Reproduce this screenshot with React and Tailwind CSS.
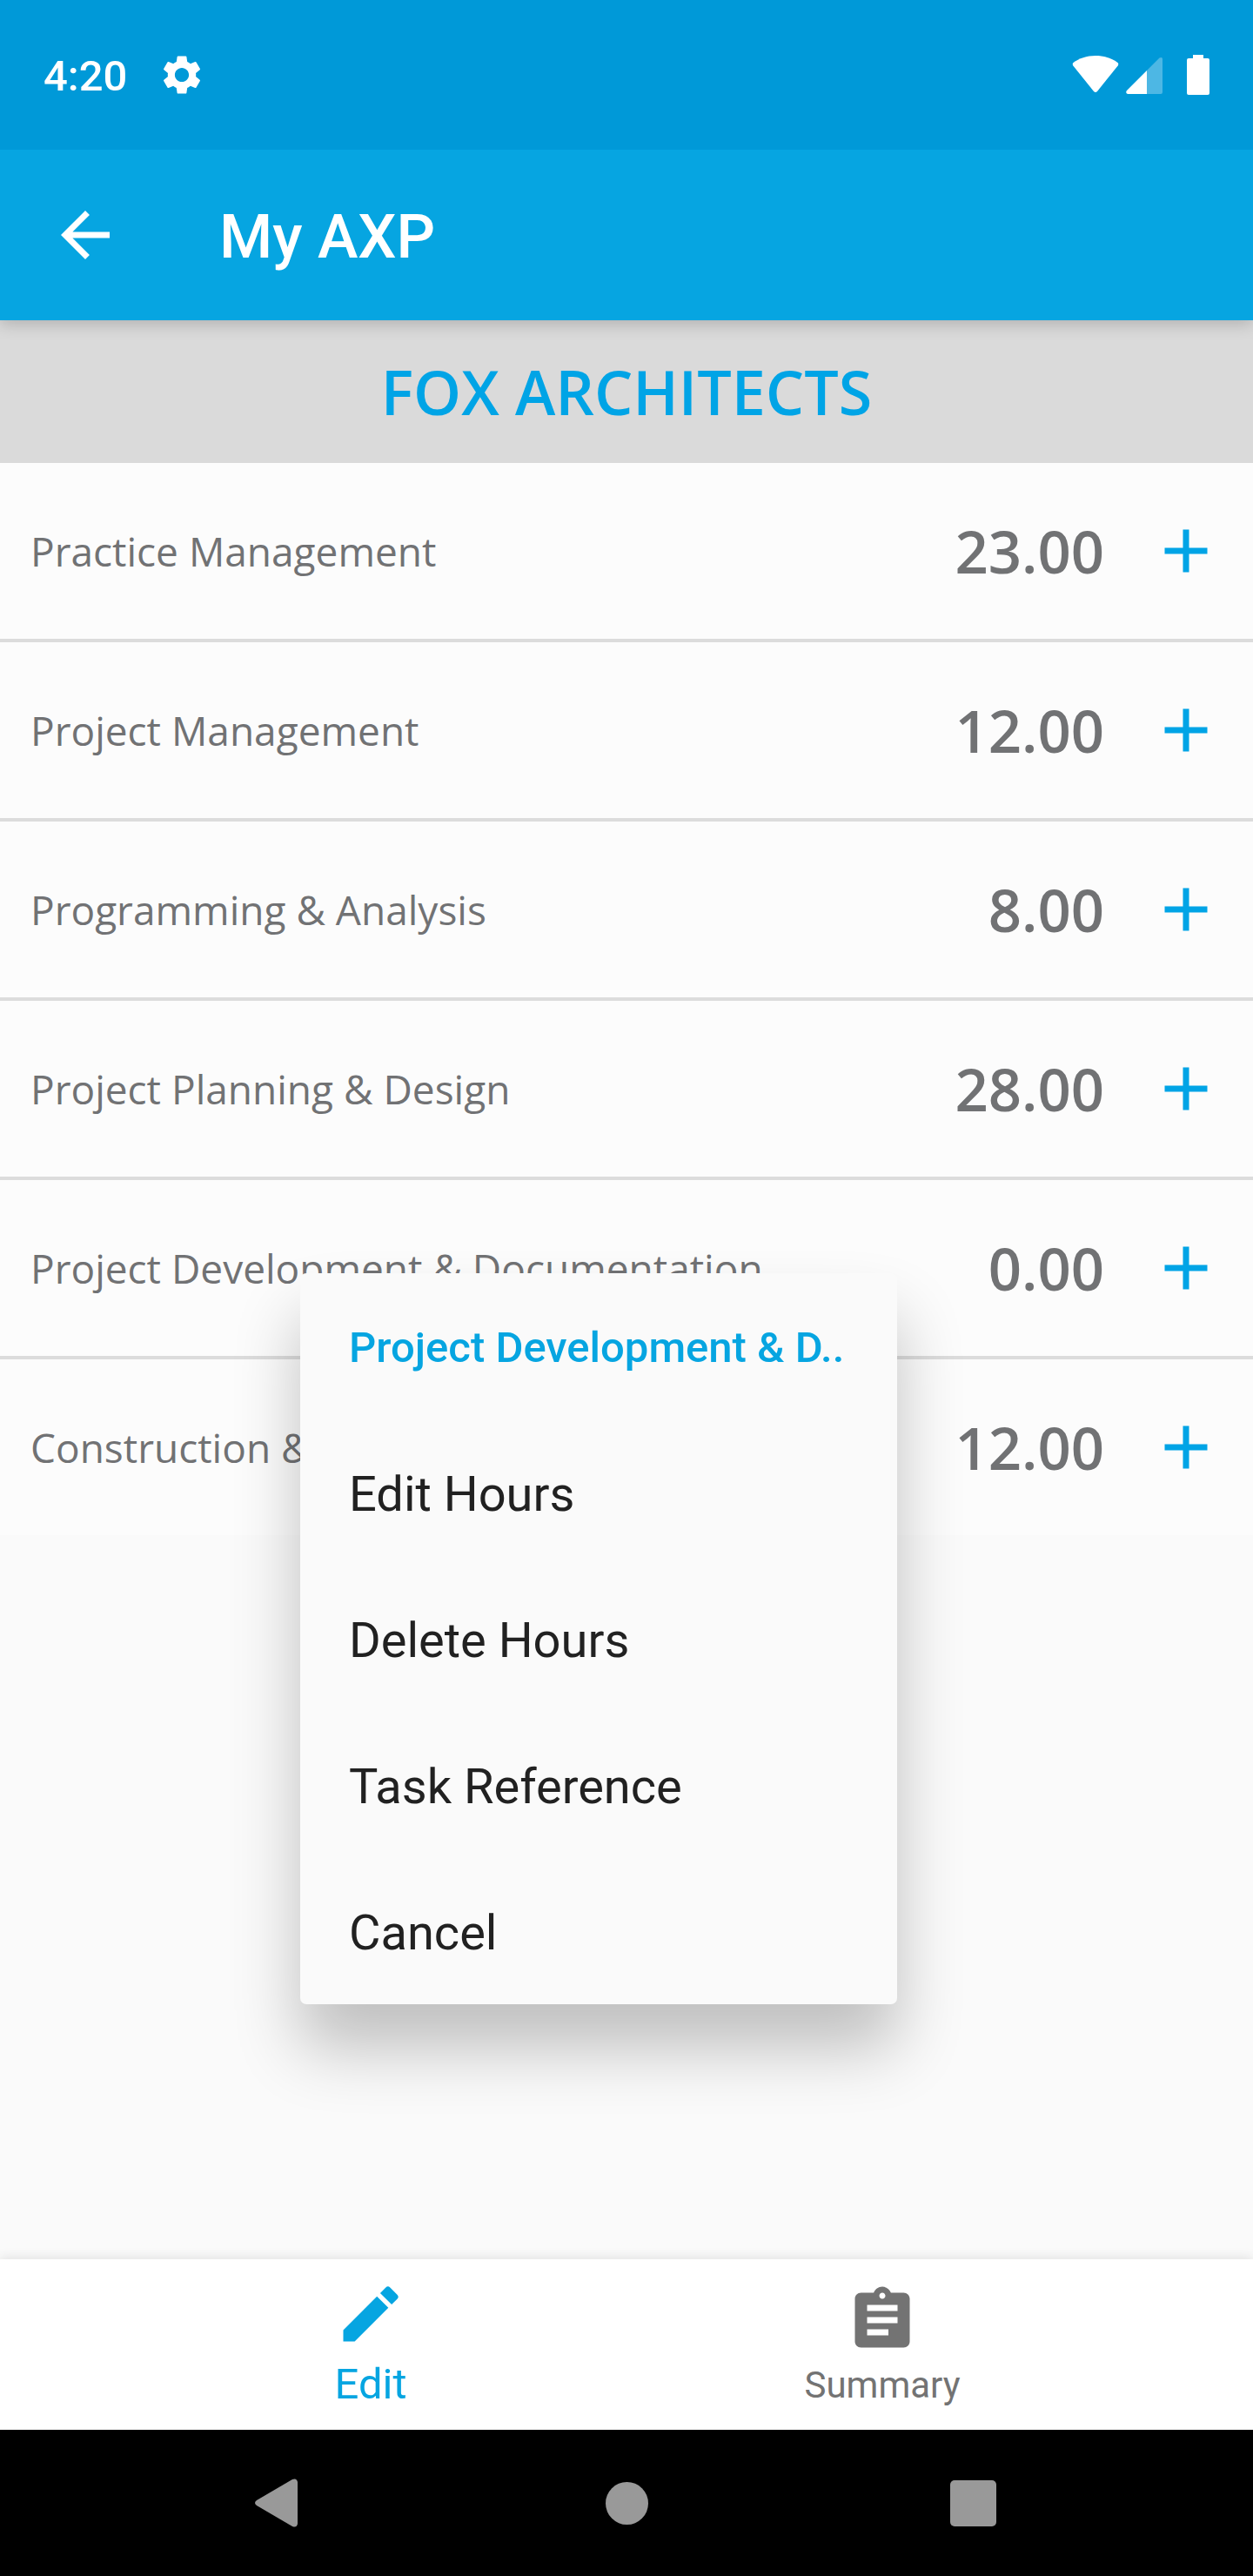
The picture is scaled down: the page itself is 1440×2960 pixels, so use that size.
import React from "react";
import {
  MdAdd,
  MdArrowBack,
  MdAssignment,
  MdEdit,
  MdSettings
} from "react-icons/md";

const categories = [
  { name: "Practice Management", hours: "23.00" },
  { name: "Project Management", hours: "12.00" },
  { name: "Programming & Analysis", hours: "8.00" },
  { name: "Project Planning & Design", hours: "28.00" },
  { name: "Project Development & Documentation", hours: "0.00" },
  { name: "Construction & Evaluation", hours: "12.00" }
];

const menuItems = ["Edit Hours", "Delete Hours", "Task Reference", "Cancel"];

function StatusBar() {
  return (
    <div className="relative z-20 h-[172px] bg-[#0099d8] flex items-center justify-between pl-[50px] pr-[50px] text-white">
      <div className="flex items-center gap-9">
        <span className="pt-1 text-[49px] leading-[56px] font-medium">4:20</span>
        <MdSettings className="size-[54px]" />
      </div>
      <div className="flex items-center">
        <svg className="w-[54px] h-[46px]" viewBox="0 0 54 46" fill="currentColor">
          <path d="M27 1C17 1 8 4 1.500 9Q0 10.500 1.300 12.500L25 42Q27 44 29 42L52.700 12.500Q54 10.500 52.500 9C46 4 37 1 27 1Z" />
        </svg>
        <svg className="ml-2 w-[43px] h-[46px]" viewBox="0 0 43 46" fill="currentColor">
          <path d="M42 5V43Q42 45 40 45H24V18L38.500 3.500Q42 2 42 5Z" opacity="0.3" />
          <path d="M24 18V45H2Q-1 44 1 41Z" />
        </svg>
        <svg className="ml-[27px] w-[26px] h-[46px]" viewBox="0 0 26 46" fill="currentColor">
          <path d="M7 0H19V4H24Q26 4 26 6V44Q26 46 24 46H2Q0 46 0 44V6Q0 4 2 4H7Z" />
        </svg>
      </div>
    </div>
  );
}

function AppBar() {
  return (
    <header className="relative z-10 h-[196px] bg-[#06a5e1] flex items-center pl-14 gap-28 text-white shadow-[0_4px_18px_rgba(0,0,0,0.2)]">
      <button type="button" aria-label="Back">
        <MdArrowBack className="size-[84px]" />
      </button>
      <h1 className="pt-1 text-[70px] leading-[82px] font-medium">My AXP</h1>
    </header>
  );
}

function CategoryRow({ name, hours }) {
  return (
    <li className="h-[206px] bg-[#fcfcfc] border-b-4 border-[#dcdcdc] last:h-[202px] last:border-b-0 flex items-center px-[35px] text-[#717274] font-['Open_Sans',sans-serif]">
      <span className="flex-1 text-[46px] leading-[62px]">{name}</span>
      <span className="text-[67px] leading-[90px] font-semibold">{hours}</span>
      <button type="button" aria-label={`Add hours to ${name}`} className="ml-[52px] text-[#00a4e6]">
        <MdAdd className="size-[84px]" />
      </button>
    </li>
  );
}

function HoursMenu() {
  return (
    <div
      role="menu"
      className="absolute left-[345px] top-[1463px] z-20 w-[686px] rounded-[7px] bg-[#fafafa] shadow-[0_50px_76px_rgba(0,0,0,0.24)]"
    >
      <div className="h-[168px] px-14 pt-1 flex items-center text-[49px] leading-[58px] font-medium text-[#06a5e1] whitespace-nowrap">
        Project Development &amp; D..
      </div>
      {menuItems.map((item) => (
        <button
          key={item}
          type="button"
          role="menuitem"
          className="w-full h-[168px] px-14 pt-1 flex items-center text-[56px] leading-[66px] text-[#212121]"
        >
          {item}
        </button>
      ))}
    </div>
  );
}

function BottomTabs() {
  return (
    <nav className="relative h-[196px] bg-white flex justify-center shadow-[0_-2px_12px_rgba(0,0,0,0.1)]">
      <button type="button" className="w-[588px] pt-[21px] flex flex-col items-center text-[#06a5e1]">
        <MdEdit className="size-[84px]" />
        <span className="mt-2.5 text-[49px] leading-[58px]">Edit</span>
      </button>
      <button type="button" className="w-[588px] pt-7 flex flex-col items-center text-[#737373]">
        <MdAssignment className="size-[84px]" />
        <span className="mt-2 text-[42px] leading-[50px]">Summary</span>
      </button>
    </nav>
  );
}

function SystemNav() {
  return (
    <div className="h-[168px] bg-black flex items-center justify-center gap-[314px] text-[#999999]">
      <button type="button" aria-label="System back" className="size-[84px] flex items-center justify-center">
        <svg className="w-[58px] h-[56px]" viewBox="0 0 58 56" fill="currentColor">
          <path d="M43 1L2 25Q-2 28 2 31L43 55Q48 57 49 52V4Q48 -1 43 1Z" />
        </svg>
      </button>
      <button type="button" aria-label="Home" className="size-[84px] flex items-center justify-center">
        <span className="size-[49px] rounded-full bg-[#999999]" />
      </button>
      <button type="button" aria-label="Recent apps" className="size-[84px] flex items-center justify-center">
        <span className="size-[53px] rounded-[5px] bg-[#999999]" />
      </button>
    </div>
  );
}

export default function App() {
  return (
    <div className="relative min-h-screen flex flex-col bg-[#fafafa] font-[Roboto,sans-serif]">
      <StatusBar />
      <AppBar />
      <main className="flex-1">
        <h2 className="h-[164px] bg-[#dadada] flex items-center justify-center text-[70px] leading-[94px] font-semibold text-[#00a4e6] font-['Open_Sans',sans-serif]">
          FOX ARCHITECTS
        </h2>
        <ul>
          {categories.map((category) => (
            <CategoryRow key={category.name} {...category} />
          ))}
        </ul>
      </main>
      <HoursMenu />
      <BottomTabs />
      <SystemNav />
    </div>
  );
}
